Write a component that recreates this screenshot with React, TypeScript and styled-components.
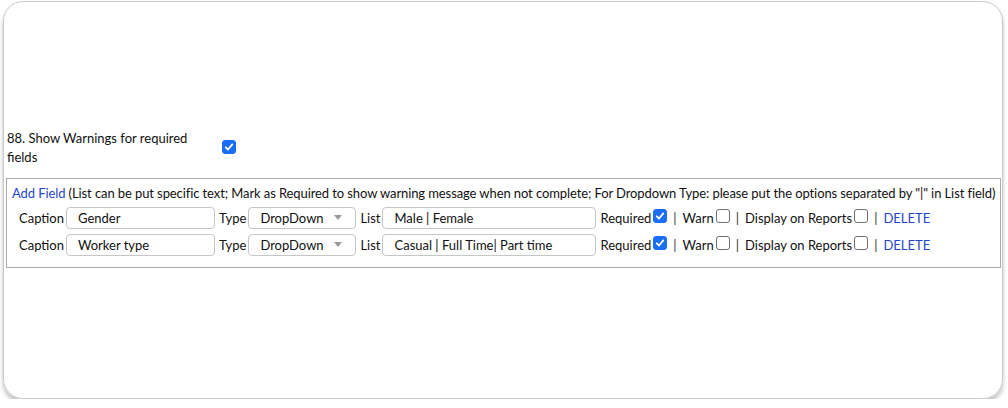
import { createGlobalStyle } from 'styled-components'
import styled from 'styled-components'

const GlobalStyle = createGlobalStyle`
  html, body {
    margin: 0;
    padding: 0;
    background: #fff;
  }
  body {
    font-family: Lato, "Noto Sans", sans-serif;
    font-size: 13px;
    color: #111;
  }
`

const Frame = styled.div`
  box-sizing: border-box;
  margin: 1px 5px 0 3px;
  height: 398px;
  border: 1.5px solid #c9c9c9;
  border-radius: 20px;
  box-shadow: 0 4px 4px rgba(0, 0, 0, 0.24);
  padding: 127px 1px 0 2px;
`

const SettingRow = styled.div`
  display: flex;
  align-items: center;
  padding-left: 1px;
`

const SettingLabel = styled.div`
  width: 196px;
  line-height: 19px;
`

const SettingCheck = styled.div`
  padding-left: 17px;
  padding-top: 2px;
`

const FieldBox = styled.div`
  margin-top: 11px;
  border: 1px solid #ababab;
  padding: 4px 0 9px 5px;
`

const Intro = styled.div`
  line-height: 21px;
  white-space: nowrap;
  letter-spacing: -0.095px;
`

const BlueLink = styled.a`
  color: #1f47c9;
  text-decoration: none;
  cursor: pointer;
`

const FieldRow = styled.div`
  display: flex;
  align-items: center;
  height: 27px;
  padding-left: 7px;
  white-space: nowrap;
`

const Label = styled.span`
  margin-right: 2px;
`

const TextInput = styled.div<{ $w: number }>`
  box-sizing: border-box;
  width: ${p => p.$w}px;
  height: 22px;
  border: 1px solid #c6c6c6;
  border-radius: 4px;
  padding: 0 11px;
  display: flex;
  align-items: center;
  margin-right: 4px;
  background: #fff;
`

const Select = styled(TextInput)`
  justify-content: space-between;
  padding-right: 13px;
`

const Caret = styled.span`
  width: 0;
  height: 0;
  border-left: 4px solid transparent;
  border-right: 4px solid transparent;
  border-top: 5px solid #9a9a9a;
`

const Box = styled.span<{ $on?: boolean }>`
  box-sizing: border-box;
  display: inline-flex;
  align-items: center;
  justify-content: center;
  width: 14px;
  height: 14px;
  border-radius: 3px;
  border: 1px solid ${p => (p.$on ? '#1a6ef5' : '#6f6f6f')};
  background: ${p => (p.$on ? '#1a6ef5' : '#fff')};
  margin-left: 2px;
  position: relative;
  top: -2px;
`

const Sep = styled.span`
  margin: 0 6px;
  color: #333;
`

function Check({ on }: { on?: boolean }) {
  return (
    <Box $on={on}>
      {on && (
        <svg width="10" height="10" viewBox="0 0 10 10">
          <path d="M1.8 5.3 L4 7.5 L8.3 2.4" fill="none" stroke="#fff" strokeWidth="1.8" strokeLinecap="round" strokeLinejoin="round" />
        </svg>
      )}
    </Box>
  )
}

const fields = [
  { caption: 'Gender', list: 'Male | Female' },
  { caption: 'Worker type', list: 'Casual | Full Time| Part time' },
]

export default function App() {
  return (
    <>
      <GlobalStyle />
      <Frame>
        <SettingRow>
          <SettingLabel>88. Show Warnings for required fields</SettingLabel>
          <SettingCheck>
            <Check on />
          </SettingCheck>
        </SettingRow>
        <FieldBox>
          <Intro>
            <BlueLink>Add Field</BlueLink> (List can be put specific text; Mark as Required to show warning message when not complete; For Dropdown Type: please put the options separated by "|" in List field)
          </Intro>
          {fields.map(f => (
            <FieldRow key={f.caption}>
              <Label>Caption</Label>
              <TextInput $w={149}>{f.caption}</TextInput>
              <Label>Type</Label>
              <Select $w={108}>
                DropDown
                <Caret />
              </Select>
              <Label>List</Label>
              <TextInput $w={214}>{f.list}</TextInput>
              <span>Required</span>
              <Check on />
              <Sep>|</Sep>
              <span>Warn</span>
              <Check />
              <Sep>|</Sep>
              <span>Display on Reports</span>
              <Check />
              <Sep>|</Sep>
              <BlueLink>DELETE</BlueLink>
            </FieldRow>
          ))}
        </FieldBox>
      </Frame>
    </>
  )
}
